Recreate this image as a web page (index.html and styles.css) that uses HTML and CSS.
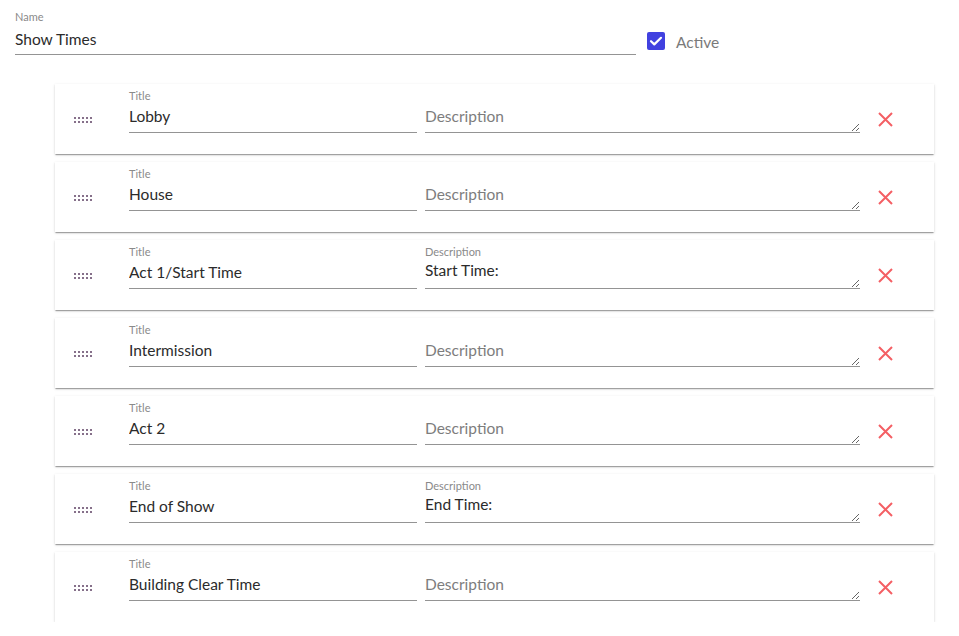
FILE: index.html
```html
<!DOCTYPE html>
<html>
<head>
<meta charset="utf-8">
<link rel="stylesheet" href="styles.css">
</head>
<body>
<div class="page">
  <div class="top">
    <div class="field name-field">
      <label class="lbl">Name</label>
      <input class="inp name-inp" type="text" value="Show Times">
    </div>
    <label class="active">
      <span class="box"><svg width="18" height="18" viewBox="0 0 18 18"><path d="M4 9.2l3.3 3.2L14 5.8" fill="none" stroke="#fff" stroke-width="2.2" stroke-linecap="round" stroke-linejoin="round"/></svg></span>
      <span class="active-txt">Active</span>
    </label>
  </div>

  <div class="list">
    <div class="card">
      <span class="handle"></span>
      <div class="field title-field"><label class="lbl">Title</label><input class="inp" type="text" value="Lobby"></div>
      <div class="field desc-field"><label class="lbl hidden">Description</label><textarea class="ta empty" placeholder="Description"></textarea></div>
      <button class="del"><svg width="15" height="15" viewBox="0 0 15 15"><path d="M1 1L14 14M14 1L1 14" stroke="#f45f64" stroke-width="2" fill="none"/></svg></button>
    </div>
    <div class="card">
      <span class="handle"></span>
      <div class="field title-field"><label class="lbl">Title</label><input class="inp" type="text" value="House"></div>
      <div class="field desc-field"><label class="lbl hidden">Description</label><textarea class="ta empty" placeholder="Description"></textarea></div>
      <button class="del"><svg width="15" height="15" viewBox="0 0 15 15"><path d="M1 1L14 14M14 1L1 14" stroke="#f45f64" stroke-width="2" fill="none"/></svg></button>
    </div>
    <div class="card">
      <span class="handle"></span>
      <div class="field title-field"><label class="lbl">Title</label><input class="inp" type="text" value="Act 1/Start Time"></div>
      <div class="field desc-field"><label class="lbl">Description</label><textarea class="ta">Start Time:</textarea></div>
      <button class="del"><svg width="15" height="15" viewBox="0 0 15 15"><path d="M1 1L14 14M14 1L1 14" stroke="#f45f64" stroke-width="2" fill="none"/></svg></button>
    </div>
    <div class="card">
      <span class="handle"></span>
      <div class="field title-field"><label class="lbl">Title</label><input class="inp" type="text" value="Intermission"></div>
      <div class="field desc-field"><label class="lbl hidden">Description</label><textarea class="ta empty" placeholder="Description"></textarea></div>
      <button class="del"><svg width="15" height="15" viewBox="0 0 15 15"><path d="M1 1L14 14M14 1L1 14" stroke="#f45f64" stroke-width="2" fill="none"/></svg></button>
    </div>
    <div class="card">
      <span class="handle"></span>
      <div class="field title-field"><label class="lbl">Title</label><input class="inp" type="text" value="Act 2"></div>
      <div class="field desc-field"><label class="lbl hidden">Description</label><textarea class="ta empty" placeholder="Description"></textarea></div>
      <button class="del"><svg width="15" height="15" viewBox="0 0 15 15"><path d="M1 1L14 14M14 1L1 14" stroke="#f45f64" stroke-width="2" fill="none"/></svg></button>
    </div>
    <div class="card">
      <span class="handle"></span>
      <div class="field title-field"><label class="lbl">Title</label><input class="inp" type="text" value="End of Show"></div>
      <div class="field desc-field"><label class="lbl">Description</label><textarea class="ta">End Time:</textarea></div>
      <button class="del"><svg width="15" height="15" viewBox="0 0 15 15"><path d="M1 1L14 14M14 1L1 14" stroke="#f45f64" stroke-width="2" fill="none"/></svg></button>
    </div>
    <div class="card">
      <span class="handle"></span>
      <div class="field title-field"><label class="lbl">Title</label><input class="inp" type="text" value="Building Clear Time"></div>
      <div class="field desc-field"><label class="lbl hidden">Description</label><textarea class="ta empty" placeholder="Description"></textarea></div>
      <button class="del"><svg width="15" height="15" viewBox="0 0 15 15"><path d="M1 1L14 14M14 1L1 14" stroke="#f45f64" stroke-width="2" fill="none"/></svg></button>
    </div>
  </div>
</div>
</body>
</html>
```
FILE: styles.css
```css
html, body {
  margin: 0;
  padding: 0;
  background: #fff;
  font-family: Lato, "Liberation Sans", sans-serif;
  color: #2b2b2b;
}
.page {
  padding: 10px 0 0 15px;
}
.top {
  display: flex;
  align-items: flex-start;
}
.field {
  display: flex;
  flex-direction: column;
}
.name-field {
  width: 621px;
}
.lbl {
  font-size: 11px;
  line-height: 14px;
  height: 14px;
  color: #8a8a8a;
}
.lbl.hidden {
  visibility: hidden;
}
.inp {
  font-family: inherit;
  font-size: 15.5px;
  color: #2b2b2b;
  border: none;
  border-bottom: 1px solid #949494;
  padding: 3px 0 6px;
  margin: 0;
  outline: none;
  background: transparent;
  height: 30px;
  box-sizing: border-box;
}
.name-inp {
  height: 31px;
  padding-top: 5px;
}
.active {
  display: flex;
  align-items: center;
  margin-left: 11px;
  margin-top: 19px;
}
.box {
  width: 18px;
  height: 18px;
  background: #4141e0;
  border-radius: 2px;
  display: block;
}
.box svg { display: block; }
.active-txt {
  margin-left: 11px;
  font-size: 15.5px;
  line-height: 20px;
  margin-top: 3px;
  color: #7a7a7a;
}
.list {
  margin: 29px 0 0 40px;
  width: 879px;
  display: flex;
  flex-direction: column;
  gap: 8px;
}
.card {
  height: 70px;
  box-sizing: border-box;
  background: #fff;
  box-shadow: 0 2px 1px -1px rgba(0,0,0,.2), 0 1px 1px 0 rgba(0,0,0,.14), 0 1px 3px 0 rgba(0,0,0,.12);
  display: flex;
  align-items: flex-start;
  padding: 5px 0 0 19px;
}
.handle {
  width: 18px;
  height: 6px;
  margin-top: 28px;
  margin-right: 37px;
  background-image: radial-gradient(circle, #86708a 0.9px, transparent 1.1px);
  background-size: 4px 4px;
  background-position: -1px -1px;
}
.title-field {
  width: 288px;
}
.desc-field {
  width: 435px;
  margin-left: 8px;
}
.ta {
  font-family: inherit;
  font-size: 15.5px;
  color: #2b2b2b;
  border: none;
  border-bottom: 1px solid #949494;
  padding: 1px 0 0;
  margin: 0;
  height: 30px;
  box-sizing: border-box;
  resize: vertical;
  outline: none;
  overflow: hidden;
  line-height: 20px;
}
.ta.empty {
  padding-top: 3px;
}
.ta::placeholder {
  color: #7d7d7d;
  opacity: 1;
}
.del {
  border: none;
  background: none;
  padding: 0;
  margin: 23px 0 0 18px;
  width: 15px;
  height: 15px;
  cursor: pointer;
}
.del svg { display: block; }
```
